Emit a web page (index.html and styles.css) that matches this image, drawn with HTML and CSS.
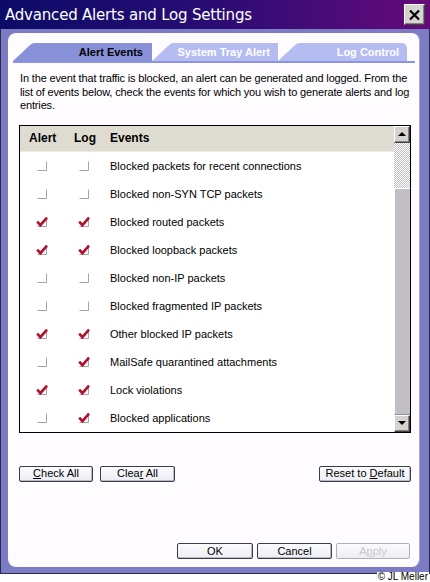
FILE: index.html
```html
<!DOCTYPE html>
<html lang="en">
  <head>
    <meta charset="UTF-8" />
    <title>Advanced Alerts and Log Settings</title>
    <link rel="stylesheet" href="styles.css">
  </head>
  <body>
    <svg class="defs" aria-hidden="true">
      <symbol id="box" viewBox="0 0 12 12">
        <path d="M10.5 1.5V10.5H1.5" fill="none" stroke="#a4a4a8" stroke-width="1" />
      </symbol>
      <symbol id="tick" viewBox="0 0 12 12">
        <path d="M10.5 1.5V10.5H1.5" fill="none" stroke="#a4a4a8" stroke-width="1" />
        <path d="M1.2 5.6L4.4 9.2L11 1.6" fill="none" stroke="#b3102c" stroke-width="2.6" />
      </symbol>
    </svg>

    <div class="window">
      <!--barra de título-->
      <div class="titlebar">
        <span class="title">Advanced Alerts and Log Settings</span>
        <span class="close">
          <svg width="13" height="12" viewBox="0 0 13 12">
            <path d="M2 1.5L11 10.5M11 1.5L2 10.5" stroke="#000" stroke-width="2.2" />
          </svg>
        </span>
      </div>

      <div class="panel">
        <div class="tabs">
          <div class="tab active">Alert Events</div>
          <div class="tab">System Tray Alert</div>
          <div class="tab last">Log Control</div>
        </div>

        <p class="intro">
          In the event that traffic is blocked, an alert can be generated and logged. From the<br />
          list of events below, check the events for which you wish to generate alerts and log<br />
          entries.
        </p>

        <!--lista de eventos-->
        <div class="listbox">
          <div class="list">
            <div class="row head">
              <span class="c-alert">Alert</span>
              <span class="c-log">Log</span>
              <span>Events</span>
            </div>
            <div class="row">
              <span class="c-alert"><svg class="cb"><use href="#box" /></svg></span>
              <span class="c-log"><svg class="cb"><use href="#box" /></svg></span>
              <span>Blocked packets for recent connections</span>
            </div>
            <div class="row">
              <span class="c-alert"><svg class="cb"><use href="#box" /></svg></span>
              <span class="c-log"><svg class="cb"><use href="#box" /></svg></span>
              <span>Blocked non-SYN TCP packets</span>
            </div>
            <div class="row">
              <span class="c-alert"><svg class="cb"><use href="#tick" /></svg></span>
              <span class="c-log"><svg class="cb"><use href="#tick" /></svg></span>
              <span>Blocked routed packets</span>
            </div>
            <div class="row">
              <span class="c-alert"><svg class="cb"><use href="#tick" /></svg></span>
              <span class="c-log"><svg class="cb"><use href="#tick" /></svg></span>
              <span>Blocked loopback packets</span>
            </div>
            <div class="row">
              <span class="c-alert"><svg class="cb"><use href="#box" /></svg></span>
              <span class="c-log"><svg class="cb"><use href="#box" /></svg></span>
              <span>Blocked non-IP packets</span>
            </div>
            <div class="row">
              <span class="c-alert"><svg class="cb"><use href="#box" /></svg></span>
              <span class="c-log"><svg class="cb"><use href="#box" /></svg></span>
              <span>Blocked fragmented IP packets</span>
            </div>
            <div class="row">
              <span class="c-alert"><svg class="cb"><use href="#tick" /></svg></span>
              <span class="c-log"><svg class="cb"><use href="#tick" /></svg></span>
              <span>Other blocked IP packets</span>
            </div>
            <div class="row">
              <span class="c-alert"><svg class="cb"><use href="#box" /></svg></span>
              <span class="c-log"><svg class="cb"><use href="#tick" /></svg></span>
              <span>MailSafe quarantined attachments</span>
            </div>
            <div class="row">
              <span class="c-alert"><svg class="cb"><use href="#tick" /></svg></span>
              <span class="c-log"><svg class="cb"><use href="#tick" /></svg></span>
              <span>Lock violations</span>
            </div>
            <div class="row">
              <span class="c-alert"><svg class="cb"><use href="#box" /></svg></span>
              <span class="c-log"><svg class="cb"><use href="#tick" /></svg></span>
              <span>Blocked applications</span>
            </div>
          </div>
          <div class="scrollbar">
            <span class="arrow up"></span>
            <span class="track"></span>
            <span class="thumb"></span>
            <span class="arrow down"></span>
          </div>
        </div>

        <div class="actions">
          <button type="button" class="btn w74"><u>C</u>heck All</button>
          <button type="button" class="btn w75">Clea<u>r</u> All</button>
          <button type="button" class="btn reset">Reset to <u>D</u>efault</button>
        </div>

        <div class="dialog-buttons">
          <button type="button" class="btn w76">OK</button>
          <button type="button" class="btn w75">Cancel</button>
          <button type="button" class="btn w74" disabled>A<u>p</u>ply</button>
        </div>
      </div>
    </div>
    <div class="credit">© JL Meller</div>
  </body>
</html>
```
FILE: styles.css
```css
body {
  margin: 0;
  padding: 0;
  width: 430px;
  height: 582px;
  background: #ffffff;
  font-family: 'Liberation Sans', Arial, sans-serif;
  font-size: 11px;
  color: #000;
  position: relative;
  overflow: hidden;
}

.defs {
  position: absolute;
  width: 0;
  height: 0;
}

.window {
  box-sizing: border-box;
  width: 430px;
  height: 574px;
  background: #7c7cc4;
  border: 1px solid #2a2a50;
  border-top: none;
  display: flex;
  flex-direction: column;
}

.titlebar {
  height: 29px;
  flex: none;
  display: flex;
  align-items: center;
  justify-content: space-between;
  padding: 0 5px 0 5px;
  margin: 0 -1px;
  background: linear-gradient(90deg, #0b0b68 0%, #2a0c74 50%, #660a7a 100%);
}

.title {
  color: #fff;
  font-family: 'DejaVu Sans', sans-serif;
  font-size: 15px;
  letter-spacing: -0.2px;
  padding-top: 1px;
}

.close {
  box-sizing: border-box;
  width: 21px;
  height: 21px;
  display: flex;
  align-items: center;
  justify-content: center;
  background: #d6d3ce;
  border: 1px solid;
  border-color: #ffffff #404040 #404040 #ffffff;
  box-shadow: inset -1px -1px 0 #808080;
}

.panel {
  margin: 4px 9px 0 7px;
  height: 534px;
  box-sizing: border-box;
  background: #fefcff;
  border-radius: 8px;
  border-right: 1px solid #a8a8c0;
  display: flex;
  flex-direction: column;
}

/* pestañas */
.tabs {
  display: flex;
  margin: 10px 4px 0 5px;
  border-bottom: 2px solid #8c94dc;
}

.tab {
  height: 18px;
  display: flex;
  align-items: center;
  justify-content: flex-end;
  padding-right: 8px;
  box-sizing: border-box;
  font-weight: bold;
  font-size: 11px;
  color: #ffffff;
  background: #b4bcf2;
  clip-path: polygon(0 100%, 16px 3px, 19px 0.5px, 22px 0, 100% 0, 100% 100%);
}

.tab:nth-child(1) {
  width: 139px;
  padding-right: 9px;
}

.tab:nth-child(2) {
  width: 126px;
}

.tab.last {
  width: 129px;
  border-top-right-radius: 5px;
}

.tab.active {
  background: #8890d8;
  color: #000;
}

.intro {
  margin: 9px 0 0 12px;
  line-height: 13.5px;
  font-size: 11px;
  letter-spacing: -0.15px;
}

/* lista */
.listbox {
  margin: 12px 0 0 11px;
  width: 392px;
  height: 308px;
  box-sizing: border-box;
  border: 1px solid #000;
  display: flex;
  background: #fff;
}

.list {
  flex: 1;
}

.row {
  display: grid;
  grid-template-columns: 44px 46px 1fr;
  align-items: center;
  height: 28px;
}

.row.head {
  height: 26px;
  background: #dedcd0;
  border-bottom: 1px solid #ecebe4;
  box-sizing: border-box;
  font-weight: bold;
  font-size: 12px;
}

.head .c-alert {
  padding-left: 9px;
}

.head .c-log {
  padding-left: 10px;
}

.cb {
  display: block;
  width: 12px;
  height: 12px;
}

.c-alert .cb {
  margin-left: 16px;
}

.c-log .cb {
  margin-left: 14px;
}

.scrollbar {
  width: 16px;
  display: flex;
  flex-direction: column;
}

.arrow {
  box-sizing: border-box;
  height: 17px;
  background: #d6d3ce;
  border: 1px solid;
  border-color: #ffffff #404040 #404040 #ffffff;
  box-shadow: inset -1px -1px 0 #808080;
  position: relative;
}

.arrow::after {
  content: '';
  position: absolute;
  left: 3px;
  top: 5px;
  border-left: 4px solid transparent;
  border-right: 4px solid transparent;
}

.arrow.up::after {
  border-bottom: 4px solid #000;
}

.arrow.down::after {
  border-top: 4px solid #000;
}

.track {
  height: 45px;
  background-image: repeating-conic-gradient(#ffffff 0 25%, #c4c0c8 0 50%);
  background-size: 2px 2px;
}

.thumb {
  flex: 1;
  box-sizing: border-box;
  background: #c2bec6;
  border-left: 1px solid #ffffff;
  border-top: 1px solid #ffffff;
  border-bottom: 1px solid #9090a0;
}

/* botones */
.actions {
  display: flex;
  gap: 7px;
  margin: 33px 8px 0 11px;
}

.btn {
  box-sizing: border-box;
  height: 16px;
  padding: 0;
  font-family: 'Liberation Sans', Arial, sans-serif;
  font-size: 11px;
  color: #000;
  background: linear-gradient(#fbfbfd, #eceef4);
  border: 1px solid #3c3c44;
  border-radius: 2px;
  box-shadow: inset -1px -1px 0 #b8bcc8;
  line-height: 13px;
}

.btn:disabled {
  color: #c8c8cc;
  border-color: #b0b0b8;
  box-shadow: none;
}

.w74 {
  width: 74px;
}

.w75 {
  width: 75px;
}

.w76 {
  width: 76px;
}

.reset {
  width: 92px;
  margin-left: auto;
}

.dialog-buttons {
  display: flex;
  justify-content: flex-end;
  gap: 4px;
  margin: auto 9px 8px 0;
}

.credit {
  position: absolute;
  right: 1px;
  bottom: 0;
  font-size: 10px;
  line-height: 10px;
  padding: 0 1px;
  background: #fff;
}
```
